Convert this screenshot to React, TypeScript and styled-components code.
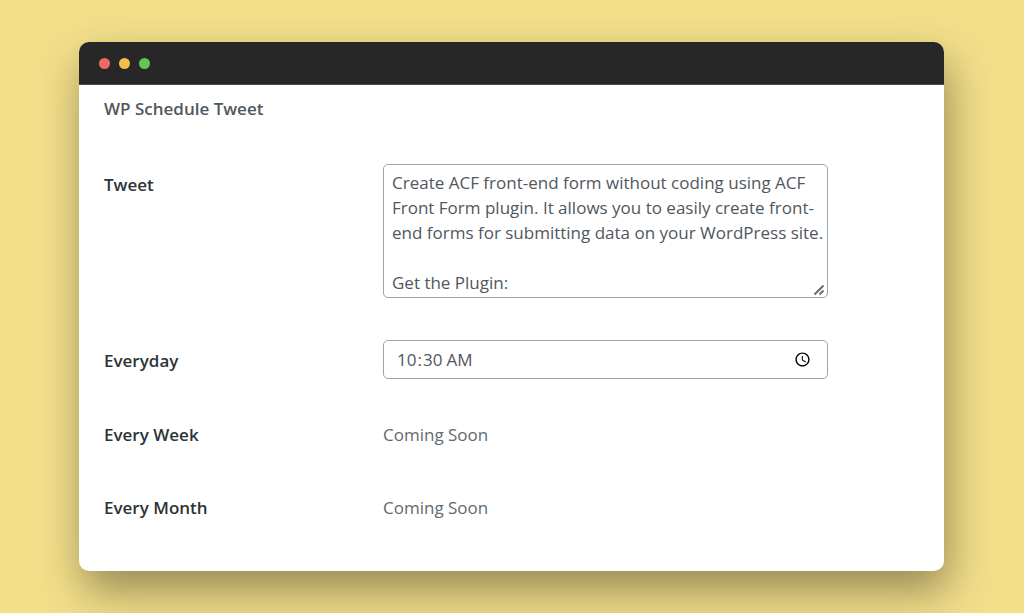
import React from "react";
import styled, { createGlobalStyle } from "styled-components";

const GlobalStyle = createGlobalStyle`
  *, *::before, *::after { box-sizing: border-box; }
  body {
    margin: 0;
    background: #f3df8a;
    color: #50575e;
    font-family: "Segoe UI", "Open Sans", "Noto Sans", sans-serif;
    font-size: 17px;
    line-height: 25px;
  }
`;

const Page = styled.main`
  min-height: 100vh;
  display: flex;
  padding: 42px 80px 42px 79px;
  overflow: hidden;
`;

const Window = styled.section`
  flex: 1;
  min-width: 0;
  border-radius: 10px;
  background: #fff;
  box-shadow: 4px 20px 44px rgba(0, 0, 0, 0.38);
`;

const TitleBar = styled.header`
  display: flex;
  align-items: center;
  gap: 9px;
  height: 43px;
  padding: 0 20px;
  border-bottom: 1px solid #4a4a4a;
  border-radius: 10px 10px 0 0;
  background: #272727;
`;

const Dot = styled.span<{ $color: string }>`
  width: 11px;
  height: 11px;
  border-radius: 50%;
  background: ${({ $color }) => $color};
`;

const Form = styled.form`
  padding: 11px 25px 46px;
`;

const Title = styled.h1`
  margin: 0 0 43px;
  font-size: 17px;
  line-height: 25px;
  font-weight: 600;
`;

const Row = styled.div`
  display: grid;
  grid-template-columns: 279px minmax(0, 445px);
  align-items: start;
  & + & {
    margin-top: 42px;
  }
`;

const TextRow = styled(Row)`
  padding: 1px 0 5px;
`;

const Label = styled.label`
  padding-top: 8px;
  color: #2c3338;
  font-weight: 600;
`;

const RowName = styled.span`
  color: #2c3338;
  font-weight: 600;
`;

const Muted = styled.span`
  color: #646970;
`;

const TweetField = styled.div`
  position: relative;
`;

const TweetBox = styled.textarea`
  display: block;
  width: 100%;
  height: 134px;
  padding: 5px 0 4px 8px;
  border: 1px solid #a0a3a8;
  border-radius: 5px;
  outline: none;
  background: #fff;
  color: #50575e;
  font: inherit;
  overflow: hidden;
  resize: none;
`;

const Grip = styled.svg`
  position: absolute;
  right: 2px;
  bottom: 2px;
  pointer-events: none;
`;

const TimeBox = styled.input`
  display: block;
  width: 100%;
  height: 39px;
  padding: 0 12px;
  border: 1px solid #a0a3a8;
  border-radius: 5px;
  outline: none;
  background: #fff;
  color: #50575e;
  font: inherit;
`;

const tweet = `Create ACF front-end form without coding using ACF Front Form plugin. It allows you to easily create front-end forms for submitting data on your WordPress site.

Get the Plugin:`;

export default function App() {
  return (
    <>
      <GlobalStyle />
      <Page>
        <Window>
          <TitleBar>
            <Dot $color="#ed6b5f" />
            <Dot $color="#f4be4f" />
            <Dot $color="#62c655" />
          </TitleBar>
          <Form>
            <Title>WP Schedule Tweet</Title>
            <Row>
              <Label htmlFor="tweet">Tweet</Label>
              <TweetField>
                <TweetBox id="tweet" defaultValue={tweet} spellCheck={false} />
                <Grip width="12" height="12" viewBox="0 0 12 12" fill="none" stroke="#6a6d71" strokeWidth="2" aria-hidden="true">
                  <path d="M0.5 10.5 9.5 1.5M5.5 10.5 9.5 6.5" />
                </Grip>
              </TweetField>
            </Row>
            <Row>
              <Label htmlFor="everyday">Everyday</Label>
              <TimeBox id="everyday" type="time" defaultValue="10:30" />
            </Row>
            <TextRow>
              <RowName>Every Week</RowName>
              <Muted>Coming Soon</Muted>
            </TextRow>
            <TextRow>
              <RowName>Every Month</RowName>
              <Muted>Coming Soon</Muted>
            </TextRow>
          </Form>
        </Window>
      </Page>
    </>
  );
}
